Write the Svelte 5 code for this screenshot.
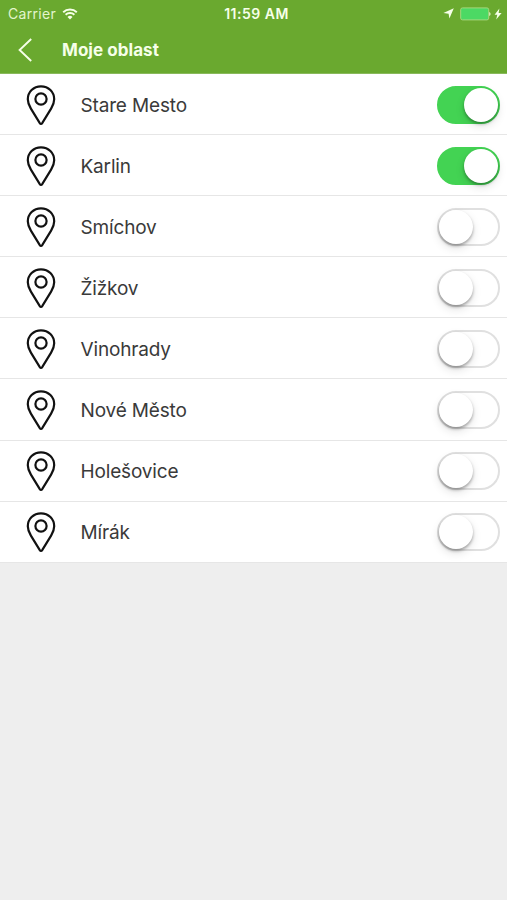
<script>
    let areas = $state([
        { name: 'Stare Mesto', active: true },
        { name: 'Karlin', active: true },
        { name: 'Smíchov', active: false },
        { name: 'Žižkov', active: false },
        { name: 'Vinohrady', active: false },
        { name: 'Nové Město', active: false },
        { name: 'Holešovice', active: false },
        { name: 'Mírák', active: false }
    ]);
</script>

<div class="screen">
    <header>
        <div class="status-bar">
            <div class="carrier">
                <span>Carrier</span>
                <svg class="wifi" width="16" height="12" viewBox="0 0 16 12">
                    <path d="M1.2 4.3a9.8 9.8 0 0 1 13.6 0M3.6 6.8a6.4 6.4 0 0 1 8.8 0" />
                    <path class="solid" d="M8 11.6 5.5 9a3.7 3.7 0 0 1 5 0z" />
                </svg>
            </div>
            <div class="time">11:59 AM</div>
            <div class="indicators">
                <svg width="11" height="11" viewBox="0 0 11 11">
                    <path class="solid" d="M10.8.3 6.4 10.6 5.6 5.7.4 5.1z" />
                </svg>
                <svg width="31" height="14" viewBox="0 0 31 14">
                    <rect class="battery" x=".7" y=".9" width="28" height="12" rx="1.8" />
                    <path class="solid" d="M29.3 5c1.6.5 1.6 3.5 0 4z" />
                </svg>
                <svg width="8" height="12" viewBox="0 0 8 12">
                    <path class="solid" d="M5.4.4.6 6.8h2.7L2.2 11.6 7.6 4.9H4.6z" />
                </svg>
            </div>
        </div>
        <div class="nav-bar">
            <button class="back" aria-label="Zpět">
                <svg width="15" height="26" viewBox="0 0 15 26">
                    <path d="M13.2 2 1.6 13l11.6 11" />
                </svg>
            </button>
            <h1>Moje oblast</h1>
        </div>
    </header>

    <ul>
        {#each areas as area}
            <li>
                <svg class="pin" width="30" height="40" viewBox="0 0 30 40">
                    <path d="M15 1.3C7.5 1.300 1.800 7 1.800 14.300c0 3.200 1.200 6.200 3.100 9.300l8.900 14.500c.6.9 1.800.9 2.400 0l8.900-14.500c1.900-3.100 3.100-6.100 3.100-9.300C28.200 7 22.500 1.300 15 1.300z" />
                    <circle cx="15" cy="14" r="5.6" />
                </svg>
                <span class="name">{area.name}</span>
                <button
                    class="toggle"
                    class:on={area.active}
                    role="switch"
                    aria-checked={area.active}
                    aria-label={area.name}
                    onclick={() => (area.active = !area.active)}
                >
                    <span class="knob"></span>
                </button>
            </li>
        {/each}
    </ul>
</div>

<style>
    :global(body) {
        background: #eeeeee;
    }

    .screen {
        min-height: 900px;
        background: #eeeeee;
        font-family: Inter, "Liberation Sans", sans-serif;
    }

    header {
        height: 74px;
        box-sizing: border-box;
        background: #6aa92f;
        color: #f6ffe9;
        border-bottom: 1px solid #89b95b;
    }

    svg {
        display: block;
        flex: none;
        fill: none;
        stroke: currentColor;
    }

    .solid {
        fill: currentColor;
        stroke: none;
    }

    .status-bar {
        height: 27px;
        display: grid;
        grid-template-columns: 1fr auto 1fr;
        align-items: center;
        padding: 0 5px 0 8px;
        font-size: 14px;
    }

    .carrier {
        display: flex;
        align-items: center;
        gap: 6px;
        color: #e3f5cd;
        letter-spacing: 0.3px;
    }

    .wifi {
        stroke-width: 1.9;
        color: #f6ffe9;
    }

    .time {
        padding-left: 3px;
        font-weight: 600;
        font-size: 14px;
        letter-spacing: 0.5px;
    }

    .indicators {
        display: flex;
        align-items: center;
        justify-content: flex-end;
        gap: 3px;
    }

    .indicators svg:first-child {
        margin-right: 3px;
    }

    .battery {
        fill: #4cd964;
        stroke: #a5d77c;
        stroke-width: 1;
    }

    .nav-bar {
        height: 46px;
        display: flex;
        align-items: center;
        padding-left: 18px;
    }

    button {
        padding: 0;
        border: 0;
        background: none;
        color: inherit;
    }

    .back {
        width: 44px;
    }

    .back svg {
        stroke-width: 1.9;
    }

    h1 {
        margin: 0;
        font-size: 17px;
        font-weight: 700;
        letter-spacing: 0.05px;
    }

    ul {
        margin: 0;
        padding: 0;
        list-style: none;
    }

    li {
        height: 61.1px;
        box-sizing: border-box;
        display: flex;
        align-items: center;
        padding: 1px 7px 0 26px;
        background: #fff;
        border-bottom: 1px solid #e6e6e6;
    }

    .pin {
        color: #111;
        stroke-width: 2.2;
    }

    .name {
        flex: 1;
        margin-left: 24.5px;
        padding-top: 1px;
        font-size: 19px;
        letter-spacing: -0.16px;
        color: #3a3a3a;
    }

    .toggle {
        width: 63px;
        height: 38px;
        box-sizing: border-box;
        display: flex;
        align-items: center;
        border: 2px solid #e0e0e0;
        border-radius: 19px;
        background: #fff;
    }

    .toggle.on {
        justify-content: flex-end;
        border-color: #43d353;
        background: #43d353;
    }

    .knob {
        width: 34px;
        height: 34px;
        border-radius: 50%;
        background: #fff;
        box-shadow: 0 2px 3px rgba(0, 0, 0, 0.3), 0 4px 10px rgba(0, 0, 0, 0.12);
    }
</style>
